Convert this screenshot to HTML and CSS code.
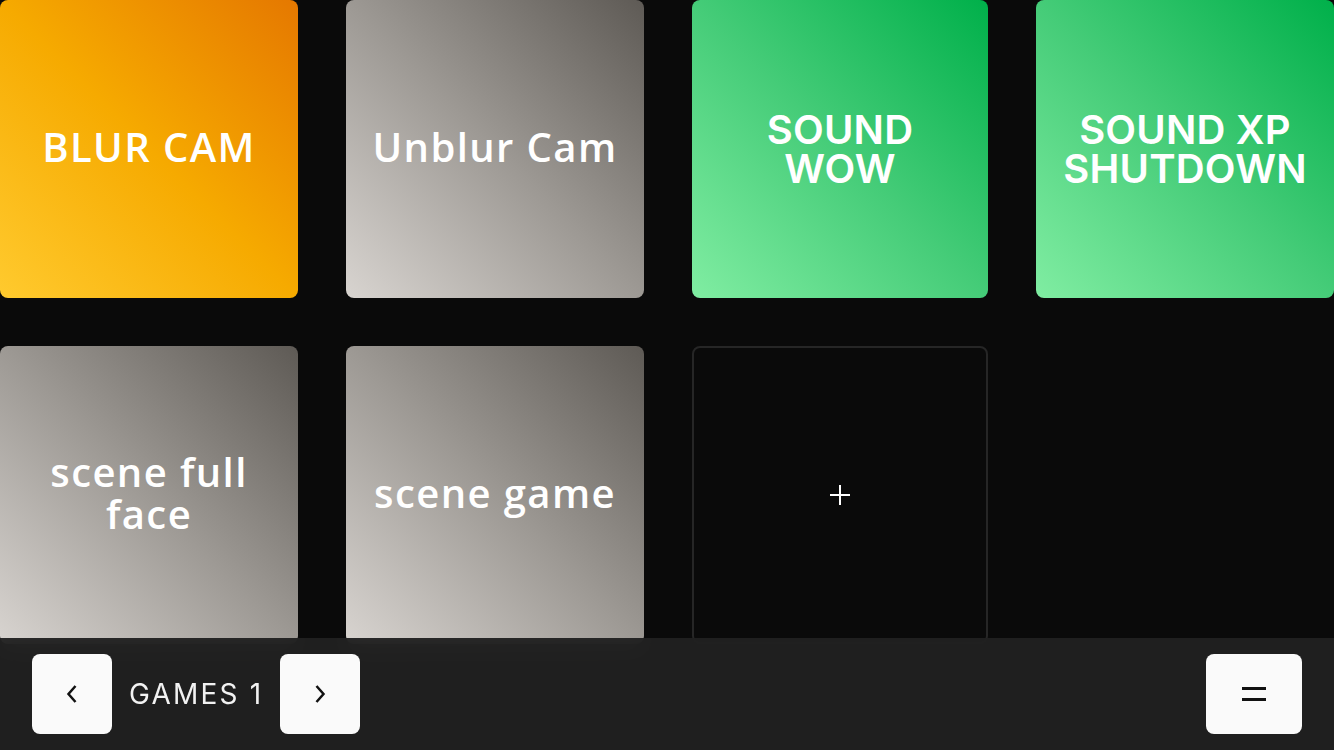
FILE: index.html
```html
<!DOCTYPE html>
<html lang="en">

<head>
    <meta charset="UTF-8">
    <meta name="viewport" content="width=device-width, initial-scale=1.0">
    <title>Deck</title>
    <link rel="stylesheet" href="styles.css">
</head>

<body>
    <div class="grid">
        <div class="tile orange wide">BLUR CAM</div>
        <div class="tile gray wide">Unblur Cam</div>
        <div class="tile green tight">SOUND<br>WOW</div>
        <div class="tile green tight">SOUND XP<br>SHUTDOWN</div>
        <div class="tile gray wide">scene full<br>face</div>
        <div class="tile gray wide">scene game</div>
        <div class="tile add">
            <svg width="24" height="24" viewBox="0 0 24 24">
                <path d="M12 2v20M2 12h20" stroke="#fff" stroke-width="2" fill="none" />
            </svg>
        </div>
    </div>

    <!-- barra de baixo -->
    <div class="bar">
        <button class="btn">
            <svg width="14" height="20" viewBox="0 0 14 20">
                <path d="M10.5 2L3.5 10l7 8" stroke="#111" stroke-width="2.5" fill="none" />
            </svg>
        </button>
        <span class="page-name">GAMES 1</span>
        <button class="btn">
            <svg width="14" height="20" viewBox="0 0 14 20">
                <path d="M3.5 2l7 8-7 8" stroke="#111" stroke-width="2.5" fill="none" />
            </svg>
        </button>
        <button class="btn menu">
            <svg width="26" height="16" viewBox="0 0 26 16">
                <path d="M1 2.5h24M1 13.5h24" stroke="#111" stroke-width="2.8" fill="none" />
            </svg>
        </button>
    </div>
</body>

</html>
```

FILE: styles.css
```css
body {
    margin: 0;
    background-color: #0a0a0a;
    overflow: hidden;
    height: 750px;
}

.grid {
    display: grid;
    grid-template-columns: 298px 298px 296px 298px;
    grid-auto-rows: 298px;
    gap: 48px;
}

.tile {
    border-radius: 8px;
    display: flex;
    align-items: center;
    justify-content: center;
    text-align: center;
    color: #fff;
    padding: 10px;
    box-sizing: border-box;
}

.wide {
    font-family: "Open Sans", sans-serif;
    font-weight: 600;
    font-size: 40px;
    line-height: 42px;
    letter-spacing: 1.4px;
    padding-bottom: 14px;
}

.tight {
    font-family: Inter, "Liberation Sans", sans-serif;
    font-weight: 600;
    font-size: 40px;
    line-height: 39px;
    letter-spacing: 0.2px;
}

.orange {
    background: linear-gradient(to top right, #ffca2e, #f6aa00 50%, #e57800);
}

.gray {
    background: linear-gradient(to top right, #d8d4d0, #9d9994 50%, #5e5a55);
}

.green {
    background: linear-gradient(to top right, #80eda2, #45cc78 50%, #00b04a);
}

.add {
    border: 2px solid #262626;
    background-color: #0a0a0a;
}

.bar {
    position: fixed;
    left: 0;
    right: 0;
    bottom: 0;
    height: 112px;
    background-color: rgba(33, 33, 33, 0.94);
    backdrop-filter: blur(10px);
    display: flex;
    align-items: center;
    padding: 0 32px;
    gap: 17px;
}

.btn {
    width: 80px;
    height: 80px;
    border: none;
    border-radius: 8px;
    background-color: #fafafa;
    display: flex;
    align-items: center;
    justify-content: center;
    padding: 0;
}

.page-name {
    font-family: Inter, "Liberation Sans", sans-serif;
    font-size: 28px;
    letter-spacing: 2.2px;
    color: #f2f2f2;
}

.menu {
    width: 96px;
    margin-left: auto;
}
```
